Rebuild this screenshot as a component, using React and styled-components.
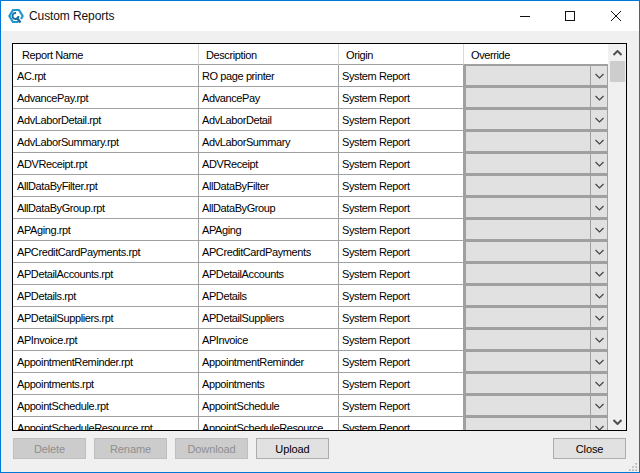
import React from 'react';
import styled, { createGlobalStyle } from 'styled-components';

const reports = [
  'AC', 'AdvancePay', 'AdvLaborDetail', 'AdvLaborSummary', 'ADVReceipt', 'AllDataByFilter',
  'AllDataByGroup', 'APAging', 'APCreditCardPayments', 'APDetailAccounts', 'APDetails',
  'APDetailSuppliers', 'APInvoice', 'AppointmentReminder', 'Appointments', 'AppointSchedule',
  'AppointScheduleResource',
];

const Chevron = ({ size = 9, width = 1.2, color = '#444' }) => (
  <svg width={size} height={size - 3} viewBox="0 0 9 6" fill="none">
    <path d="M0.5 1 L4.5 5 L8.5 1" stroke={color} strokeWidth={width} />
  </svg>
);

const Logo = () => (
  <svg width="16" height="17" viewBox="0 0 16 17" fill="none">
    <path d="M10.5 14 H5 L1.3 8 L5 2 H11 L14.7 8 L13 11" stroke="#1c95d2" strokeWidth="2.2" strokeLinejoin="round" />
    <path d="M8 5 A3 3 0 1 0 10.5 8" stroke="#1b6d9e" strokeWidth="2" />
    <path d="M8.5 9.5 L12.5 14.5" stroke="#1b6d9e" strokeWidth="2.4" />
  </svg>
);

const App = () => {
  return (
    <Window>
      <GlobalStyle />
      <TitleBar>
        <TitleLeft>
          <Logo />
          <Title>Custom Reports</Title>
        </TitleLeft>
        <WindowControls>
          <svg width="10" height="1" viewBox="0 0 10 1"><rect width="10" height="1" fill="#111" /></svg>
          <svg width="10" height="10" viewBox="0 0 10 10" fill="none"><rect x="0.5" y="0.5" width="9" height="9" stroke="#111" /></svg>
          <svg width="10" height="10" viewBox="0 0 10 10" fill="none"><path d="M0 0 L10 10 M10 0 L0 10" stroke="#111" /></svg>
        </WindowControls>
      </TitleBar>
      <Body>
        <GridFrame>
          <Table>
            <HeaderRow>
              <HeaderCell>Report Name</HeaderCell>
              <HeaderCell>Description</HeaderCell>
              <HeaderCell>Origin</HeaderCell>
              <HeaderCell $last>Override</HeaderCell>
            </HeaderRow>
            {reports.map((name) => (
              <Row key={name}>
                <Cell>{name}.rpt</Cell>
                <Cell>{name === 'AC' ? 'RO page printer' : name}</Cell>
                <Cell>System Report</Cell>
                <ComboCell>
                  <ComboField />
                  <ComboArrow><Chevron /></ComboArrow>
                </ComboCell>
              </Row>
            ))}
          </Table>
          <ScrollBar>
            <ScrollButton><UpChevron><Chevron width={2} color="#505050" /></UpChevron></ScrollButton>
            <ScrollTrack><ScrollThumb /></ScrollTrack>
            <ScrollButton><Chevron width={2} color="#505050" /></ScrollButton>
          </ScrollBar>
        </GridFrame>
        <Footer>
          <ButtonGroup>
            <FooterButton disabled>Delete</FooterButton>
            <FooterButton disabled>Rename</FooterButton>
            <FooterButton disabled>Download</FooterButton>
            <FooterButton>Upload</FooterButton>
          </ButtonGroup>
          <FooterButton>Close</FooterButton>
        </Footer>
        <Grip>
          <svg width="8" height="8" viewBox="0 0 10 10" fill="#b0b0b0">
            <rect x="8" y="0" width="2" height="2" />
            <rect x="4" y="4" width="2" height="2" />
            <rect x="8" y="4" width="2" height="2" />
            <rect x="0" y="8" width="2" height="2" />
            <rect x="4" y="8" width="2" height="2" />
            <rect x="8" y="8" width="2" height="2" />
          </svg>
        </Grip>
      </Body>
    </Window>
  );
};

export default App;

const GlobalStyle = createGlobalStyle`
  html, body {
    margin: 0;
    padding: 0;
    width: 640px;
    height: 473px;
    overflow: hidden;
  }
  * {
    box-sizing: border-box;
  }
`;

const Window = styled.div`
  position: relative;
  display: flex;
  flex-direction: column;
  width: 640px;
  height: 473px;
  border: 1px solid #0078d7;
  font-family: "Liberation Sans", Arial, sans-serif;
  font-size: 11px;
  letter-spacing: -0.4px;
  color: #000;
  background: #f0f0f0;
`;

const TitleBar = styled.div`
  display: flex;
  align-items: center;
  justify-content: space-between;
  height: 30px;
  flex-shrink: 0;
  padding-left: 7px;
  background: #fff;
`;

const TitleLeft = styled.div`
  display: flex;
  align-items: center;
  gap: 5px;
`;

const Title = styled.span`
  font-size: 12px;
  letter-spacing: -0.1px;
  color: #111;
`;

const WindowControls = styled.div`
  display: flex;
  align-items: center;
  gap: 35px;
  padding-right: 18px;
  svg:last-child {
    margin-left: 1px;
  }
`;

const Body = styled.div`
  position: relative;
  flex: 1;
  display: flex;
  flex-direction: column;
  padding: 12px 12px 12px 11px;
  min-height: 0;
`;

const GridFrame = styled.div`
  display: flex;
  height: 388px;
  flex-shrink: 0;
  background: #fff;
  border: 1px solid #000;
  overflow: hidden;
`;

const Table = styled.div`
  flex: 1;
  min-width: 0;
  display: flex;
  flex-direction: column;
`;

const HeaderRow = styled.div`
  display: grid;
  grid-template-columns: 186px 140px 125px 144px;
  height: 21px;
  flex-shrink: 0;
`;

const HeaderCell = styled.div`
  display: flex;
  align-items: center;
  padding: 1px 0 0 7px;
  border-right: ${({ $last }) => ($last ? 'none' : '1px solid #d9d9d9')};
  border-bottom: 1px solid #a0a0a0;
  &:first-child {
    padding-left: 9px;
  }
`;

const Row = styled.div`
  display: grid;
  grid-template-columns: 186px 140px 125px 144px;
  height: 22px;
  flex-shrink: 0;
`;

const Cell = styled.div`
  display: flex;
  align-items: center;
  padding-left: 3px;
  border-right: 1px solid #a0a0a0;
  border-bottom: 1px solid #a0a0a0;
  white-space: nowrap;
  overflow: hidden;
  &:first-child {
    padding-left: 4px;
  }
`;

const ComboCell = styled.div`
  display: flex;
  background: #e1e1e1;
  border: 2px solid #a0a0a0;
  border-top-width: 1px;
  border-right-width: 1px;
`;

const ComboField = styled.div`
  flex: 1;
  border-right: 1px solid #a0a0a0;
`;

const ComboArrow = styled.div`
  display: flex;
  align-items: center;
  justify-content: center;
  width: 16px;
`;

const ScrollBar = styled.div`
  display: flex;
  flex-direction: column;
  width: 18px;
  flex-shrink: 0;
  background: #f0f0f0;
`;

const ScrollButton = styled.div`
  display: flex;
  align-items: center;
  justify-content: center;
  height: 17px;
  flex-shrink: 0;
  padding-left: 1px;
`;

const UpChevron = styled.span`
  display: flex;
  transform: rotate(180deg);
`;

const ScrollTrack = styled.div`
  flex: 1;
`;

const ScrollThumb = styled.div`
  height: 21px;
  margin: 0 1px 0 2px;
  background: #cdcdcd;
`;

const Footer = styled.div`
  display: flex;
  justify-content: space-between;
  margin-top: 7px;
  padding: 0 1px;
`;

const ButtonGroup = styled.div`
  display: flex;
  gap: 8px;
`;

const FooterButton = styled.button`
  width: 73px;
  height: 21px;
  padding: 0;
  font-family: inherit;
  font-size: 11px;
  letter-spacing: -0.1px;
  color: #000;
  background: #e1e1e1;
  border: 1px solid #adadad;
  &:disabled {
    color: #8f8f8f;
    background: #cccccc;
    border-color: #bfbfbf;
  }
`;

const Grip = styled.div`
  position: absolute;
  right: 2px;
  bottom: 1px;
  display: flex;
`;
